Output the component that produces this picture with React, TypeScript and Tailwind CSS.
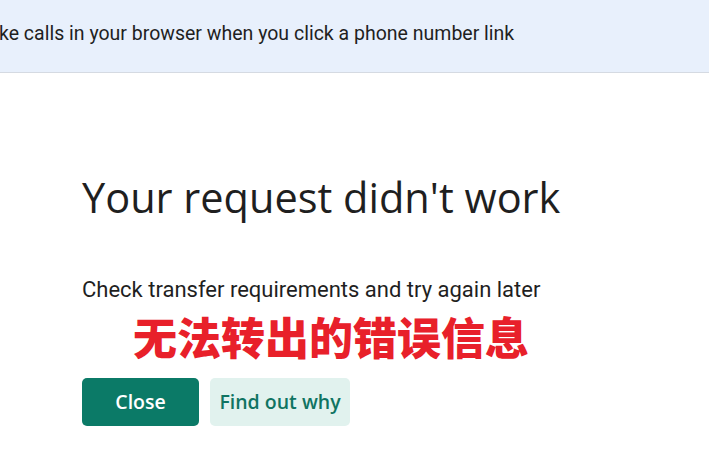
export default function App() {
  return (
    <div className="h-[474px] w-[709px] overflow-hidden bg-white font-['Roboto',sans-serif]">
      <div className="flex h-[73px] items-center overflow-hidden border-b border-[#d5dae2] bg-[#e8f0fc] pb-[5px]">
        <p className="ml-[-1px] whitespace-nowrap text-[19.5px] text-[#1f1f1f]">
          ke calls in your browser when you click a phone number link
        </p>
      </div>

      <div className="pl-[82px] pt-[97px]">
        <h1 className="font-['Open_Sans',sans-serif] text-[41.5px] leading-[54px] text-[#1f1f1f]">
          Your request didn't work
        </h1>
        <p className="mt-[51px] text-[22px] leading-[30px] text-[#1f1f1f]">
          Check transfer requirements and try again later
        </p>
        <p className="mt-[7px] pl-[51px] font-['Noto_Sans_CJK_SC',sans-serif] text-[44px] font-black leading-[48px] text-[#e8202a]">
          无法转出的错误信息
        </p>
        <div className="mt-[18px] flex gap-[11px]">
          <button className="h-[48px] w-[117px] rounded-[5px] bg-[#0b7a67] font-['Open_Sans',sans-serif] text-[19.5px] font-semibold text-white">
            Close
          </button>
          <button className="h-[48px] w-[140px] rounded-[5px] bg-[#e1f2ee] font-['Open_Sans',sans-serif] text-[19.5px] font-semibold text-[#0f7462]">
            Find out why
          </button>
        </div>
      </div>
    </div>
  );
}
